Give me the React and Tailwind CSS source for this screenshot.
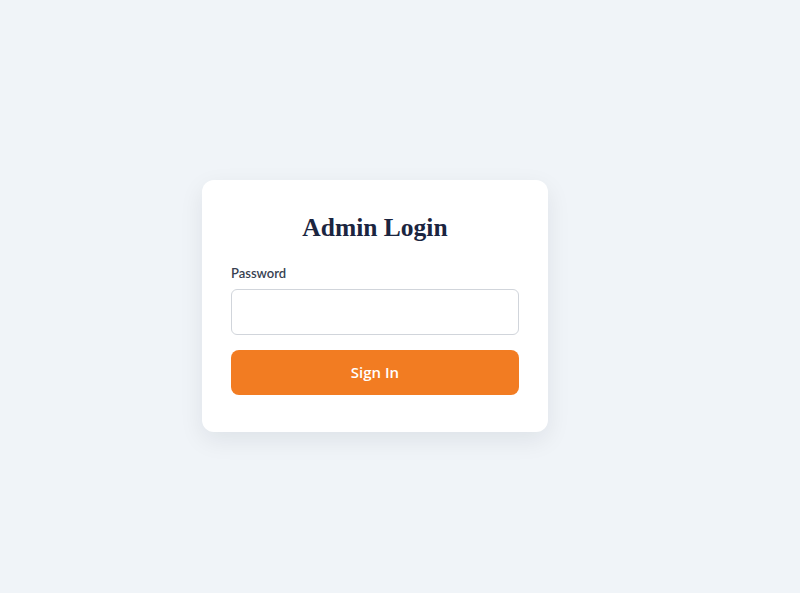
import React from 'react';

const App = () => {
    return (
        <div className="min-h-screen w-full bg-[#f0f4f8] flex items-center justify-center pr-[50px] pt-[19px]">
            {/* Login card */}
            <div className="w-[346px] bg-white rounded-xl shadow-[0_8px_24px_rgba(15,23,42,0.08)] px-[29px] pt-[32px] pb-[37px]">
                <h1
                    className="text-center text-[25.5px] leading-[32px] font-bold text-[#1b2540]"
                    style={{ fontFamily: '"Liberation Serif", "DejaVu Serif", serif' }}
                >
                    Admin Login
                </h1>
                <form className="mt-[19px] flex flex-col" onSubmit={(e) => e.preventDefault()}>
                    <label
                        className="text-[13px] leading-[20px] text-[#374151] font-semibold"
                        style={{ fontFamily: 'Lato, "Noto Sans", sans-serif' }}
                    >
                        Password
                    </label>
                    <input
                        type="password"
                        className="mt-[6px] h-[46px] w-full rounded-md border border-[#d1d5db] bg-white px-3 outline-none"
                    />
                    <button
                        type="submit"
                        className="mt-[15px] h-[45px] w-full rounded-lg bg-[#f27c22] text-white text-[15px] font-semibold"
                        style={{ fontFamily: '"Open Sans", "Noto Sans", sans-serif' }}
                    >
                        Sign In
                    </button>
                </form>
            </div>
        </div>
    );
};

export default App;
